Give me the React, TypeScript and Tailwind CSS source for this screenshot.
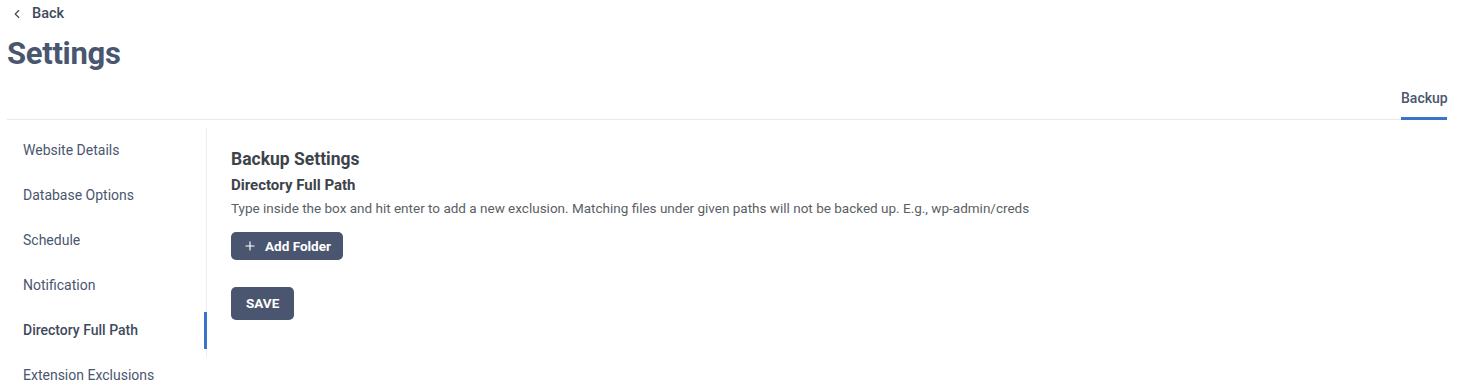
import { ChevronLeft, Plus } from "lucide-react";

const menu = [
    "Website Details",
    "Database Options",
    "Schedule",
    "Notification",
    "Directory Full Path",
    "Extension Exclusions",
];

export default function App() {
    const active = "Directory Full Path";

    return (
        <div className="w-[1457px] h-[391px] overflow-hidden bg-white text-[#4a5670]" style={{ fontFamily: "Roboto, 'Liberation Sans', sans-serif" }}>
            <div className="pl-[7px] pr-[10px]">
                <div className="flex items-center gap-[8px] h-[27px] pl-[3px] text-[14.5px] font-medium text-[#3f4a5c]">
                    <ChevronLeft size={14} strokeWidth={2} />
                    <span>Back</span>
                </div>
                <h1 className="text-[31px] font-bold leading-[36px] mt-[9px] text-[#4a5670] tracking-[-0.3px]">Settings</h1>

                <div className="flex justify-end mt-[16px] border-b border-[#e8e9ef]">
                    <div className="text-[14px] font-medium text-[#4a5670] pb-[8px] border-b-[3px] border-[#3b73c8] -mb-px w-[46px] text-center">
                        Backup
                    </div>
                </div>
            </div>

            <div className="flex pl-[7px] mt-[8px]">
                <div className="w-[200px] h-[229px] border-r border-[#ececf2] shrink-0">
                    {menu.map((item) => (
                        <div key={item} className="h-[45px] flex items-center -mr-px">
                            <div
                                className={`h-[37px] w-full flex items-center pl-[16px] text-[14px] ${item === active ? "font-medium text-[#3f4a5c] border-r-[3px] border-[#3b73c8]" : "text-[#4a5670]"}`}
                            >
                                {item}
                            </div>
                        </div>
                    ))}
                </div>

                <div className="pl-[24px] pt-[19px]">
                    <h2 className="text-[17.5px] font-bold text-[#3d434b] leading-[24px]">Backup Settings</h2>
                    <h3 className="text-[15px] font-bold text-[#3d434b] leading-[20px] mt-[4px]">Directory Full Path</h3>
                    <p className="text-[13.5px] text-[#5a5f66] leading-[20px] mt-[3px]">
                        Type inside the box and hit enter to add a new exclusion. Matching files under given paths will not be backed up. E.g., wp-admin/creds
                    </p>
                    <button className="mt-[14px] h-[28px] px-[12px] rounded-[5px] bg-[#4a5670] text-white text-[13.5px] font-bold flex items-center gap-[8px]">
                        <Plus size={14} strokeWidth={2} />
                        Add Folder
                    </button>
                    <button className="mt-[27px] h-[33px] px-[15px] rounded-[5px] bg-[#4a5670] text-white text-[13.5px] font-bold">
                        SAVE
                    </button>
                </div>
            </div>
        </div>
    );
}
